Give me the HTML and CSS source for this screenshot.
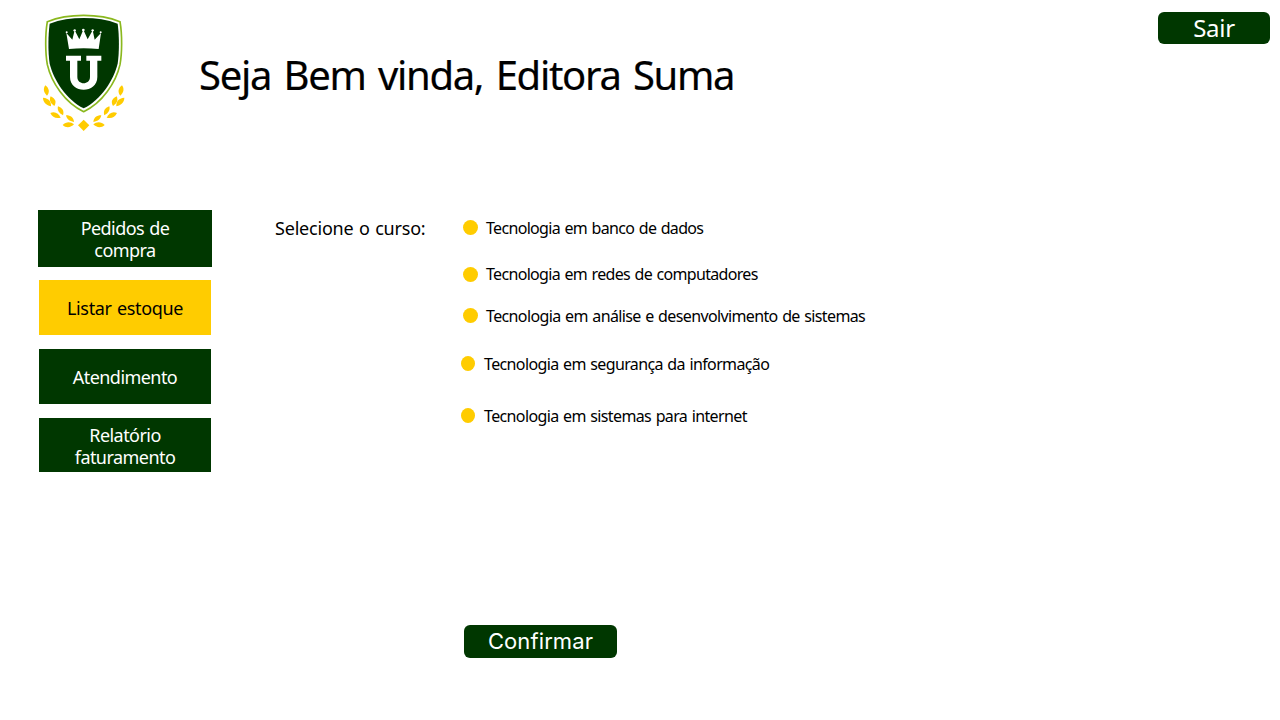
FILE: index.html
```html
<!DOCTYPE html>
<html lang="pt-BR">
<head>
<meta charset="utf-8">
<title>Editora Suma</title>
<link rel="stylesheet" href="styles.css">
</head>
<body>
<header class="header">
  <svg class="logo" viewBox="0 0 330 405" role="img" aria-label="Logo">
    <path d="M161 31C122 31 84 37 52 50C45 90 46 146 52 179C64 232 105 294 161 320C217 294 258 232 270 179C276 146 277 90 270 50C238 37 200 31 161 31Z" fill="#fff" stroke="#8ab81e" stroke-width="5"/>
    <path d="M161 39C124 39 90 44 59 56C54 92 54 143 59 176C71 225 109 284 161 310C213 284 251 225 263 176C268 143 268 92 263 56C232 44 198 39 161 39Z" fill="#003700"/>
    <g fill="#fff">
      <path d="M117 132L109 84L127 104L134 76L148 103L160 74L173 103L188 76L194 104L213 84L206 132Q161 127 117 132Z"/>
      <circle cx="110" cy="82" r="3"/><circle cx="134" cy="76" r="3.5"/><circle cx="160" cy="75" r="4"/><circle cx="188" cy="76" r="3.5"/><circle cx="212" cy="82" r="3"/>
      <path d="M108 152H153V167H142V216C142 241 180 241 180 216V167H169V152H214V167H202V216C202 267 120 267 120 216V167H108Z"/>
    </g>
    <g fill="#fc0">
      <path d="M161 344L178 361L161 378L144 361Z"/>
      <g id="leaves">
        <path d="M46 241C59 251 59 263 51 272C40 262 39 251 46 241Z"/>
        <path d="M39 278C57 280 64 290 63 304C46 299 39 290 39 278Z"/>
        <path d="M62 274C77 282 80 291 73 303C60 294 57 285 62 274Z"/>
        <path d="M61 324C74 317 86 325 92 338C77 342 67 336 61 324Z"/>
        <path d="M84 304C98 309 103 318 99 331C86 324 81 315 84 304Z"/>
        <path d="M98 360C108 349 122 349 132 358C123 368 108 370 98 360Z"/>
        <path d="M108 331C123 331 131 339 132 351C118 349 110 342 108 331Z"/>
      </g>
      <use href="#leaves" transform="translate(322 0) scale(-1 1)"/>
    </g>
  </svg>
  <h1 class="title">Seja Bem vinda, Editora Suma</h1>
  <button class="button logout">Sair</button>
</header>
<main class="main">
  <nav class="menu">
    <a class="item first">Pedidos de<br>compra</a>
    <a class="item active">Listar estoque</a>
    <a class="item">Atendimento</a>
    <a class="item last">Relatório<br>faturamento</a>
  </nav>
  <h2 class="prompt">Selecione o curso:</h2>
  <form class="form">
    <ul class="courses">
      <li class="course c1"><i class="dot"></i><span>Tecnologia em banco de dados</span></li>
      <li class="course c2"><i class="dot"></i><span>Tecnologia em redes de computadores</span></li>
      <li class="course c3"><i class="dot"></i><span>Tecnologia em análise e desenvolvimento de sistemas</span></li>
      <li class="course c4"><i class="dot"></i><span>Tecnologia em segurança da informação</span></li>
      <li class="course c5"><i class="dot"></i><span>Tecnologia em sistemas para internet</span></li>
    </ul>
    <button class="button confirm" type="button">Confirmar</button>
  </form>
</main>
</body>
</html>
```
FILE: styles.css
```css
* { box-sizing: border-box; }
body {
  margin: 0;
  height: 720px;
  overflow: hidden;
  background: #fff;
  color: #000;
  font-family: "Noto Sans", sans-serif;
}
.header {
  display: flex;
  align-items: flex-start;
  height: 210px;
  padding: 5px 10px 0 30px;
}
.logo { width: 110px; height: 135px; flex: none; }
.title {
  margin: 40px 0 0 59px;
  font-size: 40px;
  line-height: 60px;
  font-weight: 400;
  letter-spacing: -1.3px;
  word-spacing: 3.3px;
  white-space: nowrap;
  -webkit-text-stroke: 0.2px #000;
}
.button {
  border: 0;
  padding: 0;
  border-radius: 6px;
  background: #003700;
  color: #fff;
}
.logout {
  margin: 7px 0 0 auto;
  width: 112px;
  height: 32px;
  font: 24px/32px "Noto Sans", sans-serif;
  letter-spacing: -0.3px;
}
.main { display: flex; align-items: flex-start; padding-left: 38px; }
.menu { width: 174px; display: flex; flex-direction: column; align-items: center; }
.item {
  display: flex;
  align-items: center;
  justify-content: center;
  width: 172px;
  height: 55px;
  margin-bottom: 14px;
  background: #003700;
  color: #fff;
  text-align: center;
  font-size: 18px;
  line-height: 22px;
  letter-spacing: -0.55px;
  word-spacing: 1px;
}
.first { width: 174px; height: 57px; margin-bottom: 13px; }
.active { background: #fc0; color: #000; letter-spacing: -0.35px; }
.last { height: 54px; padding-top: 2px; }
.prompt {
  width: 188px;
  margin: 6px 0 0 63px;
  font-size: 18px;
  line-height: 24px;
  font-weight: 400;
  letter-spacing: -0.2px;
  word-spacing: 1px;
  white-space: nowrap;
}
.courses { list-style: none; margin: 0; padding: 8px 0 0; height: 415px; }
.course {
  display: flex;
  align-items: center;
  gap: 8px;
  height: 20px;
  font-size: 16px;
  line-height: 20px;
  letter-spacing: -0.63px;
  word-spacing: 1px;
  white-space: nowrap;
}
.dot { width: 15px; height: 15px; margin-bottom: 1px; border-radius: 50%; background: #fc0; }
.c1, .c2 { letter-spacing: -0.68px; }
.c2 { margin-top: 26px; }
.c2 .dot { margin-bottom: 0; }
.c3 { margin-top: 22px; }
.c4 { margin: 28px 0 0 -2px; }
.c5 { margin: 32px 0 0 -2px; }
.c4 .dot, .c5 .dot { width: 14px; margin-right: 1px; }
.confirm {
  display: block;
  margin-left: 1px;
  width: 153px;
  height: 33px;
  font: 22px/33px Inter, sans-serif;
  letter-spacing: 0.1px;
}
```
